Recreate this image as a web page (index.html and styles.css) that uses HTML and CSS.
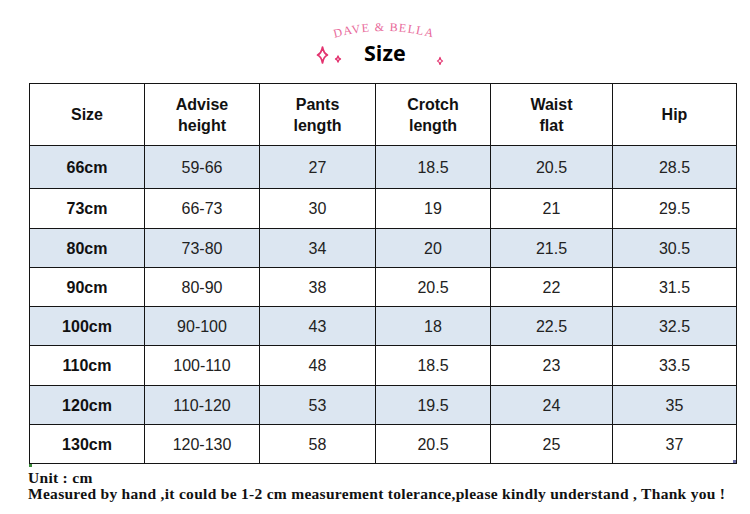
FILE: index.html
```html
<!DOCTYPE html>
<html lang="en">
<head>
<meta charset="utf-8">
<title>Size chart</title>
<link rel="stylesheet" href="styles.css">
</head>
<body>
<header class="logo">
  <div class="brand-row">
    <svg class="brand-art" width="120" height="43" viewBox="0 0 120 43" xmlns="http://www.w3.org/2000/svg">
      <defs>
        <path id="arc" d="M6 39 Q60 23 114 39"/>
      </defs>
      <text class="brand"><textPath href="#arc" startOffset="50%" text-anchor="middle">DAVE &amp; BELLA</textPath></text>
    </svg>
  </div>
  <div class="title-row">
    <svg class="stars-left" width="28" height="22" viewBox="0 0 28 22" xmlns="http://www.w3.org/2000/svg">
      <path class="star" d="M6.5 4 Q7.6 10.4 11.5 12 Q7.6 13.6 6.5 20 Q5.4 13.6 1.5 12 Q5.4 10.4 6.5 4 Z"/>
      <path class="star thin" d="M22 13 Q22.5 15.5 24.5 16 Q22.5 16.5 22 19 Q21.5 16.5 19.5 16 Q21.5 15.5 22 13 Z"/>
    </svg>
    <span class="title">Size</span>
    <svg class="star-right" width="8" height="22" viewBox="0 0 8 22" xmlns="http://www.w3.org/2000/svg">
      <path class="star thin" d="M4 14.5 Q4.5 17.3 6.5 18 Q4.5 18.7 4 21.5 Q3.5 18.7 1.5 18 Q3.5 17.3 4 14.5 Z"/>
    </svg>
  </div>
</header>
<div class="chart">
<table class="size-table">
  <colgroup>
    <col class="c-a"><col class="c-a"><col class="c-b"><col class="c-a"><col class="c-c"><col class="c-d">
  </colgroup>
  <thead>
    <tr class="head">
      <th>Size</th><th>Advise<br>height</th><th>Pants<br>length</th><th>Crotch<br>length</th><th>Waist<br>flat</th><th>Hip</th>
    </tr>
  </thead>
  <tbody>
    <tr class="alt first"><th>66cm</th><td>59-66</td><td>27</td><td>18.5</td><td>20.5</td><td>28.5</td></tr>
    <tr class="tall"><th>73cm</th><td>66-73</td><td>30</td><td>19</td><td>21</td><td>29.5</td></tr>
    <tr class="alt"><th>80cm</th><td>73-80</td><td>34</td><td>20</td><td>21.5</td><td>30.5</td></tr>
    <tr><th>90cm</th><td>80-90</td><td>38</td><td>20.5</td><td>22</td><td>31.5</td></tr>
    <tr class="alt"><th>100cm</th><td>90-100</td><td>43</td><td>18</td><td>22.5</td><td>32.5</td></tr>
    <tr class="tall"><th>110cm</th><td>100-110</td><td>48</td><td>18.5</td><td>23</td><td>33.5</td></tr>
    <tr class="alt"><th>120cm</th><td>110-120</td><td>53</td><td>19.5</td><td>24</td><td>35</td></tr>
    <tr><th>130cm</th><td>120-130</td><td>58</td><td>20.5</td><td>25</td><td>37</td></tr>
  </tbody>
</table>
</div>
<div class="notes">
  <p>Unit : cm</p>
  <p>Measured by hand ,it could be 1-2 cm measurement tolerance,please kindly understand , Thank you !</p>
</div>
</body>
</html>
```

FILE: styles.css
```css
html, body {
  margin: 0;
  padding: 0;
  background: #ffffff;
}

body {
  width: 750px;
  height: 514px;
  overflow: hidden;
  font-family: "Liberation Sans", Arial, sans-serif;
  color: #111;
}

.logo {
  height: 83px;
  display: flex;
  flex-direction: column;
}

.brand-row {
  height: 43px;
  display: flex;
  justify-content: center;
  padding-left: 18px;
}

.brand-art {
  display: block;
}

.brand {
  font-family: "Liberation Serif", "Times New Roman", serif;
  font-size: 12px;
  letter-spacing: 1.2px;
  fill: #e8699a;
}

.title-row {
  height: 40px;
  display: flex;
  justify-content: center;
  align-items: flex-start;
  padding-left: 10px;
}

.stars-left,
.star-right {
  display: block;
  flex: none;
}

.star {
  fill: none;
  stroke: #e3336f;
  stroke-width: 1.7;
  stroke-linejoin: round;
}

.star.thin {
  stroke-width: 1.3;
}

.title {
  width: 41px;
  margin: 0 31px 0 20px;
  text-align: center;
  white-space: nowrap;
  font-family: "Open Sans", "DejaVu Sans", sans-serif;
  font-weight: 700;
  font-size: 21.5px;
  line-height: 20px;
  color: #000;
}

.chart {
  position: relative;
  width: 707px;
  margin-left: 29px;
}

.chart::before {
  content: "";
  position: absolute;
  left: 0;
  bottom: -3px;
  width: 3px;
  height: 3px;
  background: #3a8a3a;
}

.chart::after {
  content: "";
  position: absolute;
  right: 0;
  bottom: 1px;
  width: 3px;
  height: 3px;
  background: #6a6fa8;
}

.size-table {
  width: 707px;
  table-layout: fixed;
  border-collapse: collapse;
  font-size: 16px;
}

.c-a { width: 115px; }
.c-b { width: 116px; }
.c-c { width: 122px; }
.c-d { width: 124px; }

.size-table th,
.size-table td {
  border: 1px solid #141414;
  padding: 0;
  text-align: center;
  vertical-align: middle;
  line-height: 21px;
}

.size-table th {
  font-weight: 700;
  color: #111;
}

.size-table td {
  font-weight: 400;
  color: #222;
}

.head {
  height: 62px;
  background: #fff;
}

.size-table tbody tr {
  height: 39px;
}

.size-table tbody tr.first {
  height: 43px;
}

.size-table tbody tr.tall {
  height: 40px;
}

.alt {
  background: #dce6f1;
}

.notes {
  padding: 6px 0 0 28px;
  font-family: "Liberation Serif", "Times New Roman", serif;
  font-weight: 700;
  font-size: 15.5px;
  line-height: 16px;
  letter-spacing: 0.29px;
  color: #111;
}

.notes p {
  margin: 0;
  white-space: nowrap;
}
```
